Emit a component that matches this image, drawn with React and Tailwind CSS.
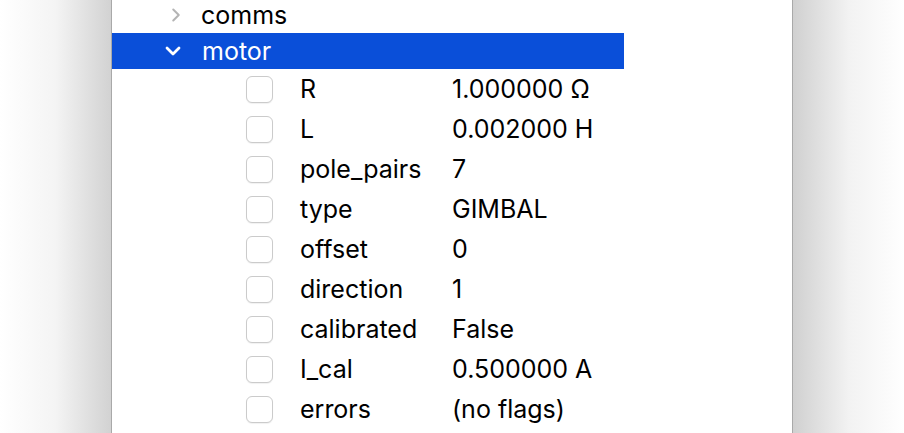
import { ChevronRight, ChevronDown } from "lucide-react";

const motorFields = [
    { name: "R", value: "1.000000 Ω" },
    { name: "L", value: "0.002000 H" },
    { name: "pole_pairs", value: "7" },
    { name: "type", value: "GIMBAL" },
    { name: "offset", value: "0" },
    { name: "direction", value: "1" },
    { name: "calibrated", value: "False" },
    { name: "I_cal", value: "0.500000 A" },
    { name: "errors", value: "(no flags)" },
];

const FieldRow = ({ name, value }) => (
    <div className="flex items-center h-[40px]">
        <div className="w-[134px] shrink-0" />
        <div className="w-[27px] h-[27px] rounded-[6px] border border-[#cbcbcb] bg-white shadow-[0_1px_1px_rgba(0,0,0,0.06)] shrink-0" />
        <span className="ml-[27px] w-[152px] shrink-0 translate-y-[1px]">{name}</span>
        <span className="translate-y-[1px]">{value}</span>
    </div>
);

export default function App() {
    return (
        <div
            className="flex w-[904px] h-[433px] overflow-hidden bg-white text-[25px] text-black"
            style={{ fontFamily: "Inter, 'Noto Sans', sans-serif" }}
        >
            {/* left window shadow */}
            <div className="w-[112px] shrink-0 bg-gradient-to-r from-white via-[#f4f4f4] to-[#d2d2d2] border-r border-[#a9a9a9]" />

            <div className="flex-1 flex flex-col mt-[-3px]">
                <div className="flex items-center h-[36px]">
                    <div className="w-[53px] shrink-0" />
                    <ChevronRight size={22} strokeWidth={2.2} className="text-[#b4b4b4]" />
                    <span className="ml-[14px] translate-y-[1px]">comms</span>
                </div>
                <div className="flex items-center h-[36px] w-[512px] bg-[#0a4fd9] text-white">
                    <div className="w-[49px] shrink-0" />
                    <ChevronDown size={24} strokeWidth={2.8} className="text-white" />
                    <span className="ml-[17px] translate-y-[1px]">motor</span>
                </div>
                {motorFields.map((f) => (
                    <FieldRow key={f.name} name={f.name} value={f.value} />
                ))}
            </div>

            {/* right window shadow */}
            <div className="w-[112px] shrink-0 bg-gradient-to-r from-[#d0d0d0] via-[#f2f2f2] to-white border-l border-[#a9a9a9]" />
        </div>
    );
}
